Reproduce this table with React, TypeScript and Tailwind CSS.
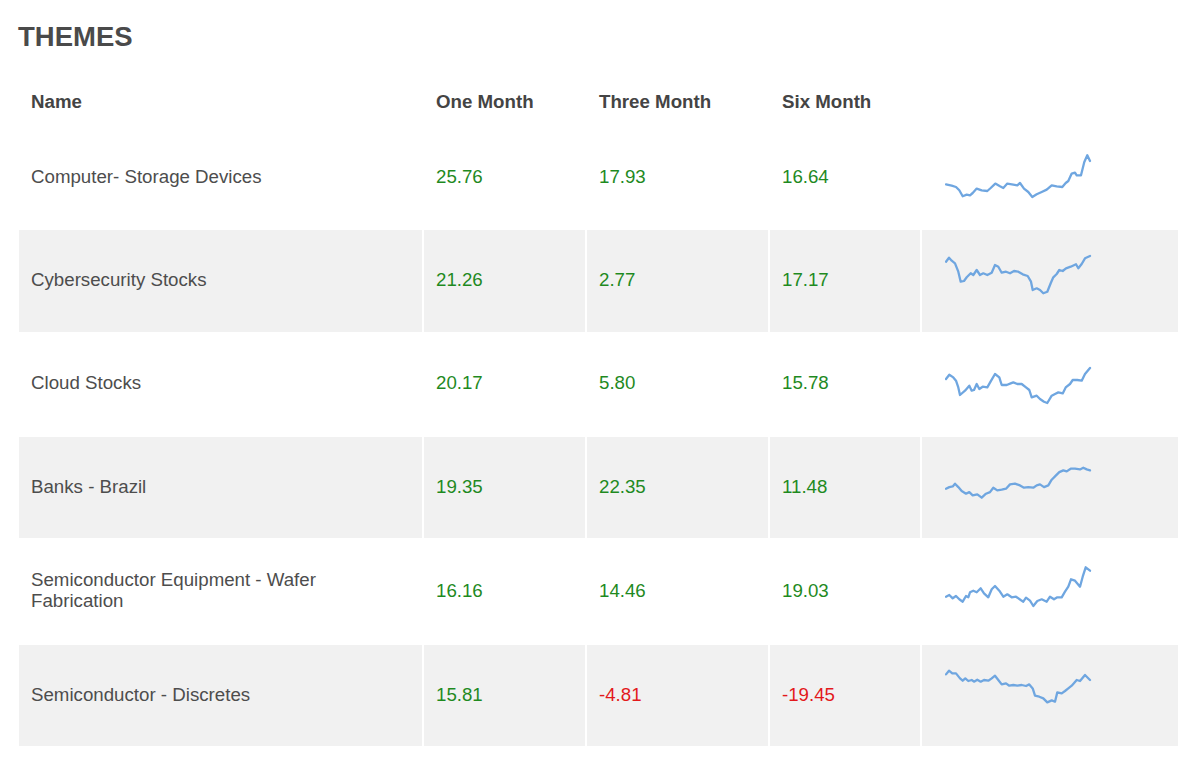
type Theme = {
  name: string;
  oneMonth: number;
  threeMonth: number;
  sixMonth: number;
  spark: number[][];
};

const themes: Theme[] = [
  {
    name: "Computer- Storage Devices",
    oneMonth: 25.76,
    threeMonth: 17.93,
    sixMonth: 16.64,
    spark: [[0,57.3],[5.7,58.6],[10,60],[13.3,63.3],[16.7,69.3],[20.7,67.6],[24,68.3],[26.7,66],[30.7,61.6],[35.7,63.3],[41.3,64],[44.7,61],[49.3,56.6],[54,59.3],[57.3,61],[61.3,56.6],[67.3,57.6],[71.3,58.3],[74,56],[78,61.6],[82.3,65],[86.3,70],[90.7,67.3],[95.7,65],[100.7,62.6],[105.7,58.3],[110.7,59.3],[116.3,60],[119.7,56],[122.3,54],[125.7,46.6],[129,45.6],[130.7,48.3],[135,48.3],[138.3,35],[141.3,28.3],[144,34]],
  },
  {
    name: "Cybersecurity Stocks",
    oneMonth: 21.26,
    threeMonth: 2.77,
    sixMonth: 17.17,
    spark: [[0,31.7],[3,27.7],[5.7,30.7],[9,33.3],[12.3,41.7],[14.7,51.7],[18,51],[20.7,47.3],[24.7,43.3],[27.3,45],[30.7,40],[34,45],[37.3,43.3],[41.3,45],[45.7,42.7],[49,35],[52.3,36.7],[55.7,42.7],[60,41.7],[64,43.3],[68,41],[72.3,41.7],[76.7,44.3],[81.7,46],[85,51.7],[86.7,60],[90.7,58.3],[94,60],[97.3,63.3],[101.3,61.7],[104.7,53.3],[107.3,47.3],[110.7,44],[113.3,40],[116.7,41],[120,38.3],[124.7,36.7],[130,34.3],[132.3,38.3],[135.7,34],[139,28.3],[144,26]],
  },
  {
    name: "Cloud Stocks",
    oneMonth: 20.17,
    threeMonth: 5.8,
    sixMonth: 15.78,
    spark: [[0,45],[3.3,40.7],[7.3,43.4],[10,46.7],[12.3,53.4],[14,61],[19,56.7],[23.3,51.7],[25.7,56.7],[28,56],[30.7,50],[33.3,55],[36.7,52.7],[41.3,53.4],[44.7,47.4],[49,40],[53.3,43.4],[55.7,51],[60.7,51],[64.7,49.4],[67.3,48.4],[71.3,50],[75.7,50],[80,53.4],[83.3,56],[85.7,63.4],[90.7,61.7],[94,65],[98,67.7],[101.3,69],[105.7,61.7],[109,60],[112.3,58.4],[116.7,59.4],[119.7,53.4],[124,50],[126.7,46],[131.3,46],[135.7,46.7],[139,40],[144,34]],
  },
  {
    name: "Banks - Brazil",
    oneMonth: 19.35,
    threeMonth: 22.35,
    sixMonth: 11.48,
    spark: [[0,51.7],[3.3,50.1],[6.7,49.4],[9,46.7],[12.3,50.1],[15.7,54.1],[20,56.7],[23.3,55.1],[26.7,58.4],[31.3,57.4],[35.7,60.7],[40,56.7],[44,55.1],[47.3,50.7],[51.3,53.4],[55.7,52.7],[60,51.7],[64,47.4],[69,46.7],[74,48.4],[78,50.7],[82.3,50.1],[87.3,50.7],[90.7,48.4],[94,47.4],[98,50.1],[102.3,48.4],[105.7,42.7],[110,38.4],[113.3,35.1],[117.3,33.4],[120.7,34.4],[124.7,31.7],[129,31.7],[134,32.4],[137.3,30.7],[140.7,32.4],[144,33.4]],
  },
  {
    name: "Semiconductor Equipment - Wafer Fabrication",
    oneMonth: 16.16,
    threeMonth: 14.46,
    sixMonth: 19.03,
    spark: [[0,56.7],[3.3,55],[6.7,58.3],[10,56],[13.3,59.3],[16.7,61.7],[20,56],[22.3,57.3],[24,52.3],[27.3,50.7],[30.7,52.3],[34.7,48.3],[38,53.3],[42.3,57.3],[45.7,49.3],[49,46],[53.3,50.7],[57.3,56.7],[61.3,54.3],[65.7,57.3],[70,56.7],[74.7,60],[77.3,61.7],[80,57.7],[84,60.7],[87.3,66],[91.3,61],[95.7,59.3],[100.7,61.7],[104,56.7],[108,59.3],[111.3,57.3],[115.7,57.3],[119,51.7],[122.3,46.7],[125,39.3],[129,40.7],[134,46.7],[136.7,36.7],[139.7,27.3],[144,30.7]],
  },
  {
    name: "Semiconductor - Discretes",
    oneMonth: 15.81,
    threeMonth: -4.81,
    sixMonth: -19.45,
    spark: [[0,29.4],[3,25.7],[6.3,28.4],[10,28.4],[14,33.4],[16.7,35.7],[19.3,33.4],[22.3,36],[25.7,35],[28,36.7],[31.3,34.7],[34.7,36.7],[38,35],[42.3,35.7],[45.7,33.4],[49,30.7],[52.3,35],[55.7,39.4],[60,38.4],[63.3,40.7],[67.3,40],[71.3,40.7],[75.7,40],[80,41],[83.3,39.4],[86.7,43.4],[89,50.7],[93.3,51.7],[97.3,53.4],[101.3,57.4],[105.7,55.4],[109,56.7],[111.3,47.4],[115.7,48.4],[119,46],[122.3,43.4],[125.7,40.7],[130.7,35],[134,36],[139,30],[144,35]],
  },
];

function Sparkline({ points }: { points: number[][] }) {
  return (
    <svg width="150" height="101" viewBox="0 0 150 101" className="block">
      <polyline
        points={points.map(([x, y]) => `${x + 1},${y}`).join(" ")}
        fill="none"
        stroke="#6fa6e0"
        strokeWidth="2.3"
        strokeLinejoin="round"
        strokeLinecap="round"
      />
    </svg>
  );
}

function Value({ v }: { v: number }) {
  return (
    <span className={v < 0 ? "text-[#e3191c]" : "text-[#1f8a1f]"}>{v.toFixed(2)}</span>
  );
}

export default function App() {
  return (
    <div className="min-h-[773px] bg-white pt-[21px] font-['Liberation_Sans',Arial,sans-serif] text-[#4a4a4a]">
      <h2 className="pl-[18px] text-[27.5px] font-bold leading-[32px] text-[#4a4a4a]">THEMES</h2>
      <table className="mt-[23px] ml-[17px] w-[1163px] table-fixed border-separate border-spacing-[2px] text-[18.7px] leading-[21px]">
        <colgroup>
          <col className="w-[403px]" />
          <col className="w-[161px]" />
          <col className="w-[181px]" />
          <col className="w-[150px]" />
          <col className="w-[256px]" />
        </colgroup>
        <thead>
          <tr className="h-[47px] text-left font-bold text-[#444]">
            <th className="px-[12px] pb-[1px] align-middle">Name</th>
            <th className="px-[12px] pb-[1px] align-middle">One Month</th>
            <th className="px-[12px] pb-[1px] align-middle">Three Month</th>
            <th className="px-[12px] pb-[1px] align-middle">Six Month</th>
            <th></th>
          </tr>
        </thead>
        <tbody>
          {themes.map((t, i) => (
            <tr key={t.name} className={i % 2 === 1 ? "bg-[#f1f1f1]" : "bg-white"}>
              <td className={`${i === 4 ? "h-[103px]" : "h-[101.3px]"} pl-[12px] pr-[40px] pb-[3px] align-middle text-[#4d4d4d]`}>{t.name}</td>
              <td className="px-[12px] pb-[3px] align-middle"><Value v={t.oneMonth} /></td>
              <td className="px-[12px] pb-[3px] align-middle"><Value v={t.threeMonth} /></td>
              <td className="px-[12px] pb-[3px] align-middle"><Value v={t.sixMonth} /></td>
              <td className="p-0 pl-[23px] align-top"><Sparkline points={t.spark} /></td>
            </tr>
          ))}
        </tbody>
      </table>
    </div>
  );
}
